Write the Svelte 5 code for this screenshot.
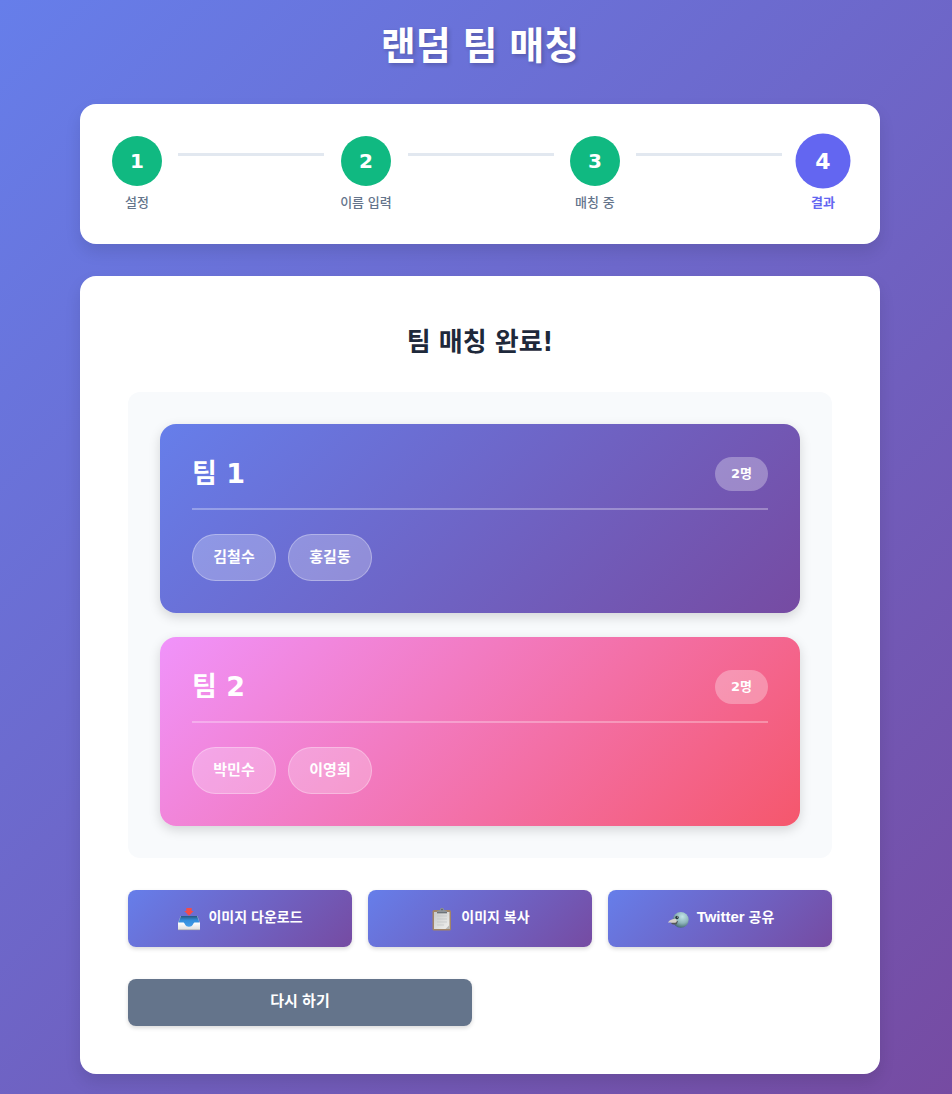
<script>
  const steps = [
    { label: '설정', state: 'done' },
    { label: '이름 입력', state: 'done' },
    { label: '매칭 중', state: 'done' },
    { label: '결과', state: 'active' }
  ];
  const teams = [
    { name: '팀 1', theme: 'indigo', members: ['김철수', '홍길동'] },
    { name: '팀 2', theme: 'pink', members: ['박민수', '이영희'] }
  ];
</script>

<div class="page">
  <div class="container">
    <h1>랜덤 팀 매칭</h1>

    <ol class="stepper">
      {#each steps as step, i}
        {#if i > 0}<li class="line" aria-hidden="true"></li>{/if}
        <li class="step {step.state}">
          <span class="circle">{i + 1}</span>
          <span class="label">{step.label}</span>
        </li>
      {/each}
    </ol>

    <main>
      <h2>팀 매칭 완료!</h2>

      <div class="results">
        {#each teams as team}
          <section class="team {team.theme}">
            <header>
              <h3>{team.name}</h3>
              <span class="count">{team.members.length}명</span>
            </header>
            <ul>
              {#each team.members as member}
                <li>{member}</li>
              {/each}
            </ul>
          </section>
        {/each}
      </div>

      <div class="actions">
        <button type="button">
          <svg viewBox="0 0 24 24" aria-hidden="true">
            <defs>
              <linearGradient id="tray" x1="0" y1="0" x2="0" y2="1">
                <stop offset="0" stop-color="#27597f" />
                <stop offset=".35" stop-color="#328cdb" />
                <stop offset="1" stop-color="#48a2ee" />
              </linearGradient>
              <linearGradient id="front" x1="0" y1="0" x2="0" y2="1">
                <stop offset="0" stop-color="#ffffff" />
                <stop offset="1" stop-color="#dedede" />
              </linearGradient>
            </defs>
            <path d="M3.500 9h17L23 16H1z" fill="#9fb6ce" />
            <path d="M4 9h16l2.500 7-5 5h-11l-5-5z" fill="url(#tray)" />
            <path d="M1 15.500h5.500c1.200 0 1.500 4.300 5.500 4.300s4.300-4.300 5.500-4.300H23V23H1z" fill="url(#front)" />
            <path d="M1 22.700h22" stroke="#aaa9ae" stroke-width=".7" />
            <path d="M9.300 1h5.400v3h2L12 8.800 7.300 4h2z" fill="#f34c4a" />
          </svg>
          <span class="text">이미지 다운로드</span>
        </button>
        <button type="button">
          <svg viewBox="0 0 24 24" aria-hidden="true">
            <defs>
              <linearGradient id="sheet" x1="0" y1="0" x2="1" y2="1">
                <stop offset="0" stop-color="#c8c9c9" />
                <stop offset="1" stop-color="#f0f0ee" />
              </linearGradient>
            </defs>
            <rect x="2.500" y="3" width="18.500" height="20.500" rx="1.500" fill="#a28467" />
            <path d="M4 5h15.500v17H4z" fill="url(#sheet)" />
            <path d="M15.500 22l4-4v4z" fill="#b8b8b5" />
            <path d="M7 9h10M7 12h10M7 15h10M7 18h7" stroke="#c2c4c4" stroke-width=".7" />
            <path d="M7 6V4l3-1c0-3 4-3 4 0l3 1v2z" fill="#8e9398" />
            <path d="M7 5.800h10" stroke="#60666b" />
            <circle cx="12" cy="2.600" r=".8" fill="#555c66" />
          </svg>
          <span class="text">이미지 복사</span>
        </button>
        <button type="button">
          <svg viewBox="-2 0 24 24" aria-hidden="true">
            <defs>
              <radialGradient id="bird" cx=".6" cy=".3" r=".75">
                <stop offset="0" stop-color="#c1e4e7" />
                <stop offset=".55" stop-color="#8eb5bb" />
                <stop offset="1" stop-color="#3d636c" />
              </radialGradient>
            </defs>
            <circle cx="12.800" cy="12.800" r="7.900" fill="url(#bird)" />
            <path d="M5 14.500c-1.500.5-2 1.500-1.500 2.300.7 1 3 1 5.200.4L10 14z" fill="#535659" />
            <path d="M7 11.800c-3.500.3-6.800 2.200-6.700 4 1.700-.8 3.700-.2 5.200 0 2 .3 3.700-.8 3.200-2.400C8.400 12.300 8 11.800 7 11.800z" fill="#d5d1c9" />
            <circle cx="9" cy="10.500" r="1.700" fill="#263338" />
            <circle cx="9.400" cy="10" r=".5" fill="#fff" />
          </svg>
          <span class="text"><span class="latin">Twitter</span> 공유</span>
        </button>
      </div>

      <div class="restart">
        <button type="button">다시 하기</button>
      </div>
    </main>
  </div>
</div>

<style>
  :global(body) {
    margin: 0;
  }
  .page {
    box-sizing: border-box;
    min-height: 100vh;
    padding: 20px 20px 20px 28px;
    background: linear-gradient(135deg, #667eea 0%, #764ba2 100%);
    font-family: "DejaVu Sans Condensed", "Noto Sans CJK KR", sans-serif;
    color: #1e293b;
  }
  .container {
    max-width: 800px;
    margin: 0 auto;
  }
  h1, h2, h3, ul, ol {
    margin: 0;
    padding: 0;
    list-style: none;
  }
  h1 {
    margin-bottom: 32px;
    font-size: 38px;
    line-height: 52px;
    text-align: center;
    color: #fff;
    text-shadow: 2px 2px 4px rgba(0, 0, 0, 0.2);
  }
  .stepper {
    display: flex;
    align-items: flex-start;
    padding: 32px;
    margin-bottom: 32px;
    border-radius: 16px;
    background: #fff;
    box-shadow: 0 8px 16px rgba(0, 0, 0, 0.1);
  }
  .step {
    display: flex;
    flex-direction: column;
    align-items: center;
    gap: 8px;
    min-width: 50px;
  }
  .circle {
    display: grid;
    place-items: center;
    width: 50px;
    height: 50px;
    border-radius: 50%;
    background: #10b981;
    color: #fff;
    font-size: 20px;
    font-weight: 700;
  }
  .circle, h3, .count {
    font-family: "DejaVu Sans", "Noto Sans CJK KR", sans-serif;
  }
  .label {
    font-size: 13px;
    line-height: 18px;
    font-weight: 500;
    color: #64748b;
    white-space: nowrap;
  }
  .active .circle {
    background: #6366f1;
    transform: scale(1.1);
  }
  .active .label {
    color: #6366f1;
    font-weight: 700;
  }
  .line {
    flex: 1;
    height: 3px;
    margin: 17px 16px 0;
    background: #e2e8f0;
  }
  main {
    padding: 48px;
    border-radius: 16px;
    background: #fff;
    box-shadow: 0 8px 16px rgba(0, 0, 0, 0.1);
  }
  h2 {
    margin-bottom: 32px;
    font-size: 26px;
    line-height: 36px;
    text-align: center;
  }
  .results {
    display: grid;
    gap: 24px;
    padding: 32px;
    margin-bottom: 32px;
    border-radius: 12px;
    background: #f8fafc;
  }
  .team {
    padding: 32px;
    border-radius: 16px;
    color: #fff;
    box-shadow: 0 4px 12px rgba(0, 0, 0, 0.15);
  }
  .indigo {
    background: linear-gradient(135deg, #667eea 0%, #764ba2 100%);
  }
  .pink {
    background: linear-gradient(135deg, #f093fb 0%, #f5576c 100%);
  }
  header {
    display: flex;
    align-items: center;
    justify-content: space-between;
    padding-bottom: 16px;
    margin-bottom: 24px;
    border-bottom: 2px solid rgba(255, 255, 255, 0.3);
  }
  h3 {
    font-size: 27px;
    line-height: 36px;
  }
  .count {
    padding: 8px 16px;
    border-radius: 20px;
    background: rgba(255, 255, 255, 0.3);
    font-size: 13px;
    line-height: 18px;
    font-weight: 700;
  }
  ul {
    display: flex;
    flex-wrap: wrap;
    gap: 12px;
  }
  ul li {
    min-width: 42px;
    padding: 12px 20px;
    border: 1px solid rgba(255, 255, 255, 0.3);
    border-radius: 24px;
    background: rgba(255, 255, 255, 0.25);
    font-size: 15px;
    line-height: 21px;
    font-weight: 600;
    text-align: center;
  }
  .actions {
    display: grid;
    grid-template-columns: repeat(3, 1fr);
    gap: 16px;
    margin-bottom: 32px;
  }
  .restart {
    display: grid;
    grid-template-columns: repeat(2, 1fr);
    gap: 16px;
  }
  button {
    display: flex;
    align-items: center;
    justify-content: center;
    gap: 7px;
    padding: 10px 16px 14px;
    border: 0;
    border-radius: 8px;
    background: #64748b;
    color: #fff;
    font-family: "Liberation Sans", "Noto Sans CJK KR", sans-serif;
    font-size: 15px;
    line-height: 23px;
    font-weight: 700;
    cursor: pointer;
    box-shadow: 0 2px 4px rgba(0, 0, 0, 0.15);
  }
  .actions button {
    min-height: 57px;
    padding: 16px;
    background: linear-gradient(135deg, #667eea 0%, #764ba2 100%);
  }
  .text {
    padding-bottom: 3px;
    font-size: 14px;
    line-height: 20px;
  }
  .latin {
    font-size: 15px;
  }
  svg {
    width: 24px;
    height: 24px;
  }
</style>
